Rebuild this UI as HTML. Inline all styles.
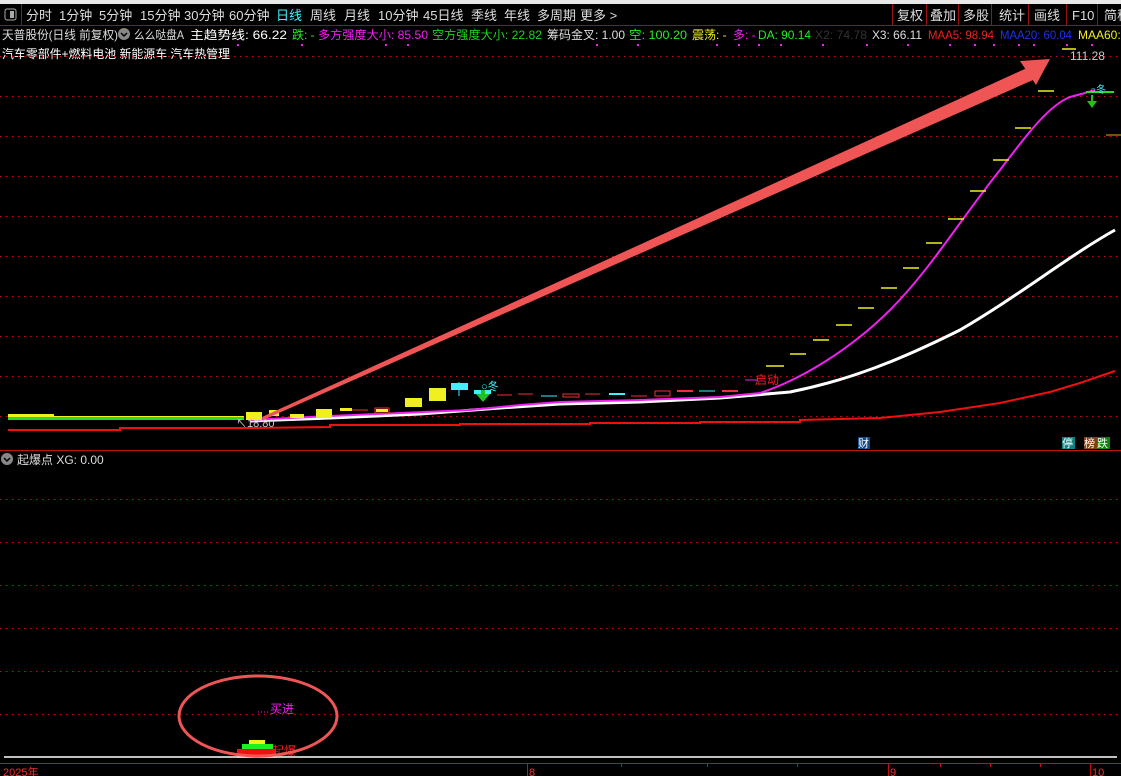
<!DOCTYPE html>
<html><head><meta charset="utf-8">
<style>
html,body{margin:0;padding:0;background:#000;width:1121px;height:776px;overflow:hidden;font-family:"Liberation Sans","Noto Sans CJK SC",sans-serif;}
svg{position:absolute;left:0;top:0}
svg text{font-family:"Liberation Sans","Noto Sans CJK SC",sans-serif;}
</style></head><body>
<svg width="1121" height="776" viewBox="0 0 1121 776">
<rect x="0" y="0" width="1121" height="4" fill="#e8e8e8"/>
<line x1="0" y1="25.5" x2="1121" y2="25.5" stroke="#a01010"/>
<line x1="21.5" y1="4" x2="21.5" y2="25" stroke="#a01010"/>
<rect x="5" y="9" width="11" height="11" rx="2" fill="none" stroke="#aaa"/><rect x="10" y="11" width="4" height="7" fill="#aaa"/>
<g font-size="13" fill="#ddd">
<text x="26" y="20">分时</text><text x="59" y="20">1分钟</text><text x="99" y="20">5分钟</text><text x="140" y="20">15分钟</text><text x="184" y="20">30分钟</text><text x="229" y="20">60分钟</text>
<text x="276" y="20" fill="#40f0ff">日线</text><text x="310" y="20">周线</text><text x="344" y="20">月线</text><text x="378" y="20">10分钟</text><text x="423" y="20">45日线</text><text x="471" y="20">季线</text><text x="504" y="20">年线</text><text x="537" y="20">多周期</text><text x="580" y="20">更多 &gt;</text>
<text x="897" y="20">复权</text><text x="930" y="20">叠加</text><text x="963" y="20">多股</text><text x="999" y="20">统计</text><text x="1034" y="20">画线</text><text x="1072" y="20">F10</text><text x="1104" y="20">简称</text>
</g>
<g stroke="#a01010"><line x1="892.5" y1="4" x2="892.5" y2="25"/><line x1="926.5" y1="4" x2="926.5" y2="25"/><line x1="958.5" y1="4" x2="958.5" y2="25"/><line x1="991.5" y1="4" x2="991.5" y2="25"/><line x1="1028.5" y1="4" x2="1028.5" y2="25"/><line x1="1066.5" y1="4" x2="1066.5" y2="25"/><line x1="1097.5" y1="4" x2="1097.5" y2="25"/></g>
<g font-size="12">
<text x="2" y="39" fill="#ddd" textLength="116" lengthAdjust="spacingAndGlyphs">天普股份(日线 前复权)</text>
<circle cx="124" cy="34" r="6" fill="#888"/><path d="M121 33l3 3 3-3" stroke="#000" stroke-width="1.5" fill="none"/>
<text x="134" y="39" fill="#ddd" textLength="50" lengthAdjust="spacingAndGlyphs">么么哒盘A</text>
<text x="190" y="39" fill="#fff" textLength="97" lengthAdjust="spacingAndGlyphs">主趋势线: 66.22</text>
<text x="292" y="39" fill="#20f020">跌: -</text>
<text x="318" y="39" fill="#f020f0" textLength="110" lengthAdjust="spacingAndGlyphs">多方强度大小: 85.50</text>
<text x="432" y="39" fill="#20d020" textLength="110" lengthAdjust="spacingAndGlyphs">空方强度大小: 22.82</text>
<text x="547" y="39" fill="#ddd" textLength="78" lengthAdjust="spacingAndGlyphs">筹码金叉: 1.00</text>
<text x="629" y="39" fill="#20f020" textLength="58" lengthAdjust="spacingAndGlyphs">空: 100.20</text>
<text x="692" y="39" fill="#f0f020">震荡: -</text>
<text x="733" y="39" fill="#f020f0">多: -</text>
<text x="758" y="39" fill="#20f020" textLength="53" lengthAdjust="spacingAndGlyphs">DA: 90.14</text>
<text x="815" y="39" fill="#333" textLength="52" lengthAdjust="spacingAndGlyphs">X2: 74.78</text>
<text x="872" y="39" fill="#ddd" textLength="50" lengthAdjust="spacingAndGlyphs">X3: 66.11</text>
<text x="928" y="39" fill="#f02020" textLength="66" lengthAdjust="spacingAndGlyphs">MAA5: 98.94</text>
<text x="1000" y="39" fill="#2030f0" textLength="72" lengthAdjust="spacingAndGlyphs">MAA20: 60.04</text>
<text x="1078" y="39" fill="#f0f020">MAA60:</text>
<text x="2" y="58" fill="#fff" textLength="228" lengthAdjust="spacingAndGlyphs">汽车零部件+燃料电池 新能源车 汽车热管理</text>
<text x="1070" y="60" fill="#ccc">111.28</text>
</g>
<g fill="#f020f0"><rect x="237" y="44" width="2" height="2"/><rect x="301" y="44" width="2" height="2"/><rect x="385" y="44" width="2" height="2"/><rect x="407" y="44" width="2" height="2"/><rect x="596" y="44" width="2" height="2"/><rect x="637" y="44" width="2" height="2"/><rect x="716" y="44" width="2" height="2"/><rect x="738" y="44" width="2" height="2"/><rect x="758" y="44" width="2" height="2"/><rect x="780" y="44" width="2" height="2"/><rect x="822" y="44" width="2" height="2"/><rect x="866" y="44" width="2" height="2"/><rect x="907" y="44" width="2" height="2"/><rect x="949" y="44" width="2" height="2"/><rect x="974" y="44" width="2" height="2"/><rect x="993" y="44" width="2" height="2"/><rect x="1018" y="44" width="2" height="2"/><rect x="1033" y="44" width="2" height="2"/><rect x="1066" y="44" width="2" height="2"/><rect x="1091" y="44" width="2" height="2"/></g>
<g stroke="#c01010" stroke-dasharray="1.5 4.5" stroke-width="1">
<line x1="0" y1="56.5" x2="1121" y2="56.5"/><line x1="0" y1="96.5" x2="1121" y2="96.5"/><line x1="0" y1="136.5" x2="1121" y2="136.5"/><line x1="0" y1="176.5" x2="1121" y2="176.5"/><line x1="0" y1="216.5" x2="1121" y2="216.5"/><line x1="0" y1="256.5" x2="1121" y2="256.5"/><line x1="0" y1="296.5" x2="1121" y2="296.5"/><line x1="0" y1="336.5" x2="1121" y2="336.5"/><line x1="0" y1="376.5" x2="1121" y2="376.5"/><line x1="0" y1="416.5" x2="1121" y2="416.5"/>
<line x1="0" y1="499.5" x2="1121" y2="499.5"/><line x1="0" y1="542.5" x2="1121" y2="542.5"/><line x1="0" y1="585.5" x2="1121" y2="585.5"/><line x1="0" y1="628.5" x2="1121" y2="628.5"/><line x1="0" y1="671.5" x2="1121" y2="671.5"/><line x1="0" y1="714.5" x2="1121" y2="714.5"/>
</g>
<line x1="0" y1="450.5" x2="1121" y2="450.5" stroke="#c01010"/>
<rect x="8" y="414" width="46" height="3" fill="#f0f020"/><rect x="54" y="416" width="190" height="3" fill="#f0f020"/>
<rect x="8" y="417" width="236" height="3" fill="#20e020"/>
<polyline points="8,430 120,430 120,428 250,428" stroke="#f01010" stroke-width="2" fill="none"/>
<polyline points="250,428 330,427 330,425 460,425 460,424 590,424 590,423 700,423 700,422 800,422 800,420 880,418 940,412 1000,403 1050,392 1080,383 1115,371" stroke="#f01010" stroke-width="2" fill="none"/>
<path d="M250,421 L330,418 L420,414 L500,408 L560,404 L640,402 L720,398 L790,392 C850,380 900,360 960,330 C1020,295 1070,255 1115,230" stroke="#fff" stroke-width="3" fill="none"/>
<path d="M250,420 L330,416 L400,413 L470,410 L520,405 L560,402 L640,400 L720,397 L760,393 C800,380 850,350 890,310 C930,270 960,220 1000,170 C1030,130 1050,105 1070,97 L1085,93 L1095,90" stroke="#f020f0" stroke-width="2" fill="none"/>
<g>
<rect x="246" y="412" width="16" height="8" fill="#f0f020"/>
<rect x="269" y="410" width="10" height="6" fill="#f0f020"/>
<rect x="290" y="414" width="14" height="4" fill="#f0f020"/>
<rect x="316" y="409" width="16" height="9" fill="#f0f020"/>
<rect x="340" y="408" width="12" height="3" fill="#f0f020"/>
<line x1="352" y1="410" x2="368" y2="410" stroke="#f03030"/>
<rect x="375" y="408" width="14" height="5" fill="none" stroke="#f03030"/><rect x="376" y="409" width="12" height="3" fill="#f0f020"/>
<rect x="405" y="398" width="17" height="9" fill="#f0f020"/>
<rect x="429" y="388" width="17" height="13" fill="#f0f020"/>
<rect x="451" y="383" width="17" height="7" fill="#40f0ff"/><line x1="459" y1="382" x2="459" y2="396" stroke="#40f0ff"/>
<rect x="474" y="390" width="17" height="4" fill="#40f0ff"/>
<path d="M476,394 L490,394 L483,402Z" fill="#20c020"/><rect x="481" y="390" width="4" height="6" fill="#20c020"/>
<text x="481" y="390" font-size="11" fill="#40f0ff">○冬</text>
<line x1="497" y1="395" x2="512" y2="395" stroke="#f03030"/>
<line x1="518" y1="394" x2="533" y2="394" stroke="#f03030"/>
<line x1="541" y1="396" x2="557" y2="396" stroke="#40f0ff"/>
<rect x="563" y="394" width="16" height="3" fill="none" stroke="#f03030"/>
<line x1="585" y1="394" x2="600" y2="394" stroke="#f03030"/>
<rect x="609" y="393" width="16" height="2" fill="#40f0ff"/>
<line x1="631" y1="396" x2="647" y2="396" stroke="#f03030"/>
<rect x="655" y="391" width="15" height="5" fill="none" stroke="#f03030"/>
<rect x="677" y="390" width="16" height="2" fill="#f03030"/>
<line x1="699" y1="391" x2="715" y2="391" stroke="#40f0ff"/>
<rect x="722" y="390" width="16" height="2" fill="#f03030"/>
<text x="755" y="384" font-size="12" fill="#f02020">启动</text>
<line x1="745" y1="380" x2="758" y2="380" stroke="#f020f0"/>
</g>
<text x="236" y="427" font-size="11" fill="#ccc">↖18.80</text>
<g stroke="#f0f020" stroke-width="1.5">
<line x1="766" y1="366" x2="784" y2="366"/><line x1="790" y1="354" x2="806" y2="354"/><line x1="813" y1="340" x2="829" y2="340"/><line x1="836" y1="325" x2="852" y2="325"/><line x1="858" y1="308" x2="874" y2="308"/><line x1="881" y1="288" x2="897" y2="288"/><line x1="903" y1="268" x2="919" y2="268"/><line x1="926" y1="243" x2="942" y2="243"/><line x1="948" y1="219" x2="964" y2="219"/><line x1="970" y1="191" x2="986" y2="191"/><line x1="993" y1="160" x2="1009" y2="160"/><line x1="1015" y1="128" x2="1031" y2="128"/><line x1="1038" y1="91" x2="1054" y2="91"/><line x1="1062" y1="49" x2="1076" y2="49"/>
</g>
<line x1="1086" y1="92" x2="1114" y2="92" stroke="#20e020" stroke-width="2"/>
<text x="1090" y="93" font-size="10" fill="#40f0ff">○冬</text>
<path d="M1087,101 L1097,101 L1092,108Z" fill="#20c020"/><rect x="1091" y="95" width="2" height="7" fill="#20c020"/>
<line x1="1106" y1="135" x2="1121" y2="135" stroke="#f0a020"/>
<!-- big arrow (tapered) -->
<polygon points="262,417 1027,68 1033,80 263,420" fill="#f05555"/>
<polygon points="1050,59 1020,61 1036,85" fill="#f05555"/>
<rect x="858" y="437" width="12" height="12" fill="#104a8a"/><text x="858" y="447" font-size="11" fill="#fff">财</text>
<rect x="1062" y="437" width="13" height="12" fill="#108080"/><text x="1062" y="447" font-size="11" fill="#fff">停</text>
<rect x="1084" y="437" width="13" height="12" fill="#804010"/><text x="1084" y="447" font-size="11" fill="#fff">榜</text>
<rect x="1097" y="437" width="13" height="12" fill="#108010"/><text x="1097" y="447" font-size="11" fill="#fff">跌</text>
<circle cx="7" cy="459" r="6" fill="#888"/><path d="M4 458l3 3 3-3" stroke="#000" stroke-width="1.5" fill="none"/>
<text x="17" y="464" font-size="12" fill="#ddd">起爆点 XG: 0.00</text>
<line x1="258" y1="712" x2="270" y2="712" stroke="#f020f0" stroke-dasharray="1 2"/>
<text x="270" y="713" font-size="12" fill="#f020f0">买进</text>
<rect x="249" y="740" width="16" height="4" fill="#f0f020"/>
<rect x="242" y="744" width="31" height="5" fill="#20f020"/>
<rect x="237" y="749" width="39" height="9" fill="#f01010"/>
<text x="272" y="755" font-size="12" fill="#f02020">起爆</text>
<line x1="4" y1="757" x2="1117" y2="757" stroke="#fff" stroke-width="1.5"/>
<ellipse cx="258" cy="716" rx="79" ry="40" fill="none" stroke="#f05555" stroke-width="3"/>
<line x1="0" y1="763.5" x2="1121" y2="763.5" stroke="#c01010"/>
<g stroke="#c01010"><line x1="527.5" y1="764" x2="527.5" y2="776"/><line x1="888.5" y1="764" x2="888.5" y2="776"/><line x1="1090.5" y1="764" x2="1090.5" y2="776"/><line x1="621.5" y1="764" x2="621.5" y2="767"/><line x1="707.5" y1="764" x2="707.5" y2="767"/><line x1="797.5" y1="764" x2="797.5" y2="767"/><line x1="940.5" y1="764" x2="940.5" y2="767"/><line x1="990.5" y1="764" x2="990.5" y2="767"/><line x1="1040.5" y1="764" x2="1040.5" y2="767"/></g>
<g font-size="11" fill="#f03030"><text x="3" y="776">2025年</text><text x="529" y="776">8</text><text x="890" y="776">9</text><text x="1092" y="776">10</text></g>
</svg>
</body></html>
